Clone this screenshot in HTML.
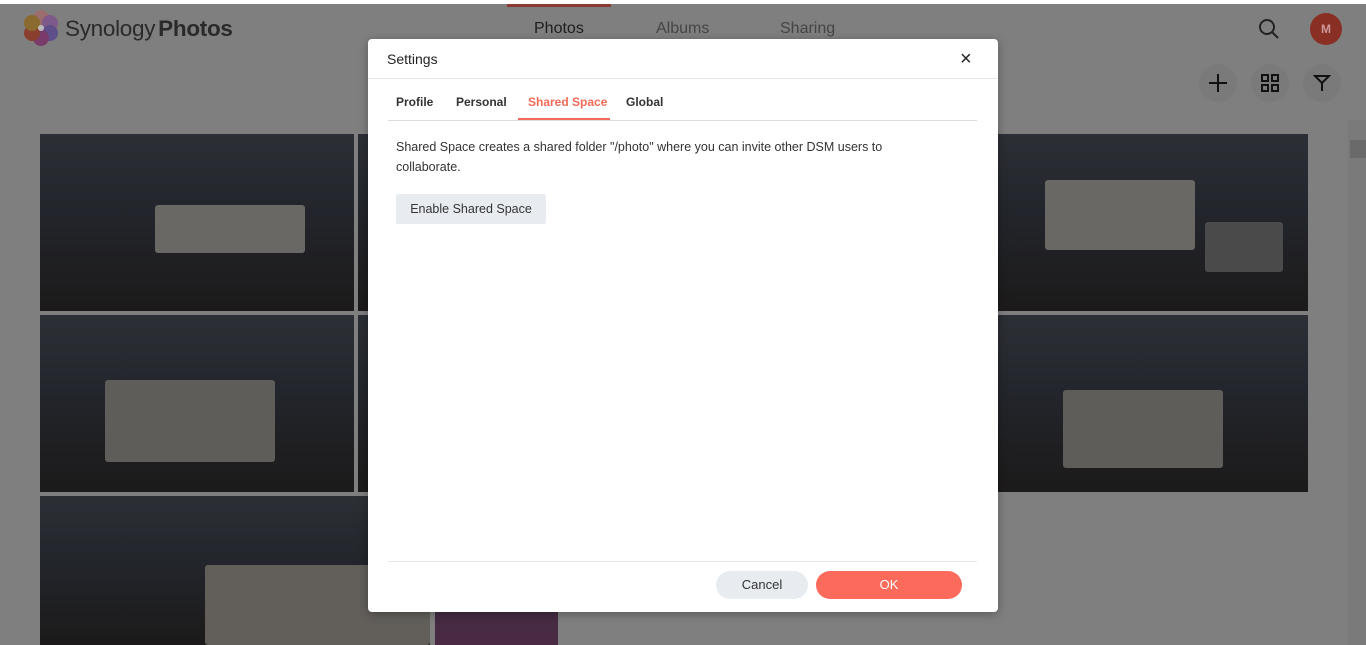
<!DOCTYPE html>
<html><head><style>
*{margin:0;padding:0;box-sizing:border-box}
body{width:1366px;height:645px;overflow:hidden;background:#7f7f7f;font-family:"Liberation Sans",sans-serif;position:relative}
.a{position:absolute}
.ph{position:absolute;background:linear-gradient(180deg,#2c2f35 0%,#22252b 45%,#1c1a1a 100%)}
.box{position:absolute;background:#6e6c68;border-radius:3px}
.tab{position:absolute;top:95px;font-size:12px;font-weight:bold;color:#333}
</style></head><body>
<div class="a" style="left:0;top:0;width:1366px;height:4px;background:#fff"></div>
<div class="a" style="left:507px;top:4px;width:104px;height:3px;background:#8a3a32"></div>
<svg class="a" style="left:23px;top:10px" width="36" height="36" viewBox="0 0 36 36">
<circle cx="18" cy="8" r="8" fill="#9c6d6d"/><circle cx="27" cy="13" r="8" fill="#7d5a8a"/><circle cx="27" cy="23" r="8" fill="#5e4f8a"/><circle cx="18" cy="28" r="8" fill="#7a3b6a"/><circle cx="9" cy="23" r="8" fill="#8a3e2e"/><circle cx="9" cy="13" r="8" fill="#8a6a2e"/><circle cx="18" cy="18" r="3" fill="#bbb"/></svg>
<div class="a" style="left:65px;top:16px;font-size:22.5px;color:#2a2a2a;letter-spacing:-0.3px">Synology<b style="margin-left:3px">Photos</b></div>
<div class="a" style="left:534px;top:20px;font-size:16px;color:#1e1e1e">Photos</div>
<div class="a" style="left:656px;top:20px;font-size:16px;color:#454545">Albums</div>
<div class="a" style="left:780px;top:20px;font-size:16px;color:#454545">Sharing</div>
<svg class="a" style="left:1258px;top:18px" width="22" height="22"><circle cx="9" cy="9" r="7" stroke="#222" stroke-width="2" fill="none"/><line x1="14" y1="14" x2="20" y2="20" stroke="#222" stroke-width="2"/></svg>
<div class="a" style="left:1310px;top:13px;width:32px;height:32px;border-radius:50%;background:#8a2f24;color:#c99;font-size:12px;font-weight:bold;text-align:center;line-height:32px">M</div>
<div class="a" style="left:1199px;top:64px;width:38px;height:38px;border-radius:50%;background:#7a7a7a"></div>
<div class="a" style="left:1251px;top:64px;width:38px;height:38px;border-radius:50%;background:#7a7a7a"></div>
<div class="a" style="left:1303px;top:64px;width:38px;height:38px;border-radius:50%;background:#7a7a7a"></div>
<svg class="a" style="left:1208px;top:73px" width="20" height="20"><path d="M10 1V19M1 10H19" stroke="#111" stroke-width="2"/></svg>
<svg class="a" style="left:1261px;top:74px" width="18" height="18" fill="none" stroke="#111" stroke-width="2"><rect x="1" y="1" width="6" height="6"/><rect x="11" y="1" width="6" height="6"/><rect x="1" y="11" width="6" height="6"/><rect x="11" y="11" width="6" height="6"/></svg>
<svg class="a" style="left:1313px;top:74px" width="18" height="18" fill="none" stroke="#111" stroke-width="2"><path d="M2 2H16L9 9ZM9 9V17"/></svg>
<div class="a" style="left:1348px;top:120px;width:18px;height:525px;background:#7a7a7a"></div>
<div class="a" style="left:1350px;top:140px;width:16px;height:18px;background:#6a6a6a"></div>
<div class="ph" style="left:40px;top:134px;width:314px;height:177px"></div>
<div class="box" style="left:155px;top:205px;width:150px;height:48px;background:#6a6864"></div>
<div class="ph" style="left:358px;top:134px;width:20px;height:177px"></div>
<div class="ph" style="left:998px;top:134px;width:310px;height:177px"></div>
<div class="box" style="left:1045px;top:180px;width:150px;height:70px;background:#6a6864"></div>
<div class="box" style="left:1205px;top:222px;width:78px;height:50px;background:#4a4a4a"></div>
<div class="ph" style="left:40px;top:315px;width:314px;height:177px"></div>
<div class="box" style="left:105px;top:380px;width:170px;height:82px;background:#5f5d59"></div>
<div class="ph" style="left:358px;top:315px;width:20px;height:177px"></div>
<div class="ph" style="left:998px;top:315px;width:310px;height:177px"></div>
<div class="box" style="left:1063px;top:390px;width:160px;height:78px;background:#5f5d59"></div>
<div class="ph" style="left:40px;top:496px;width:390px;height:149px"></div>
<div class="box" style="left:205px;top:565px;width:225px;height:80px;background:#625f5b"></div>
<div class="ph" style="left:435px;top:496px;width:123px;height:149px;background:linear-gradient(180deg,#2c2f35,#4a2a45)"></div>
<div class="a" style="left:368px;top:39px;width:630px;height:573px;background:#fff;border-radius:4px;box-shadow:0 2px 10px rgba(0,0,0,.3)">
<div class="a" style="left:19px;top:12px;font-size:14px;color:#222">Settings</div>
<div class="a" style="left:592px;top:9px;font-size:20px;color:#222">×</div>
<div class="a" style="left:0;top:39px;width:630px;height:1px;background:#e6e6e6"></div>
<div class="a" style="left:20px;top:81px;width:589px;height:1px;background:#ddd"></div>
</div>
<div class="tab" style="left:396px">Profile</div>
<div class="tab" style="left:456px">Personal</div>
<div class="tab" style="left:528px;color:#f26b58">Shared Space</div>
<div class="tab" style="left:626px">Global</div>
<div class="a" style="left:518px;top:118px;width:92px;height:2px;background:#f26b58"></div>
<div class="a" style="left:396px;top:137px;font-size:12.5px;color:#333;line-height:20px;width:540px">Shared Space creates a shared folder "/photo" where you can invite other DSM users to collaborate.</div>
<div class="a" style="left:396px;top:194px;width:150px;height:30px;background:#e8ecf1;border-radius:2px;font-size:12.5px;color:#333;text-align:center;line-height:30px">Enable Shared Space</div>
<div class="a" style="left:388px;top:561px;width:589px;height:1px;background:#e6e6e6"></div>
<div class="a" style="left:716px;top:571px;width:92px;height:28px;border-radius:14px;background:#e8ecf1;font-size:13px;color:#333;text-align:center;line-height:28px">Cancel</div>
<div class="a" style="left:816px;top:571px;width:146px;height:28px;border-radius:14px;background:#fb6a5a;font-size:13px;color:#fff;text-align:center;line-height:28px">OK</div>
</body></html>
